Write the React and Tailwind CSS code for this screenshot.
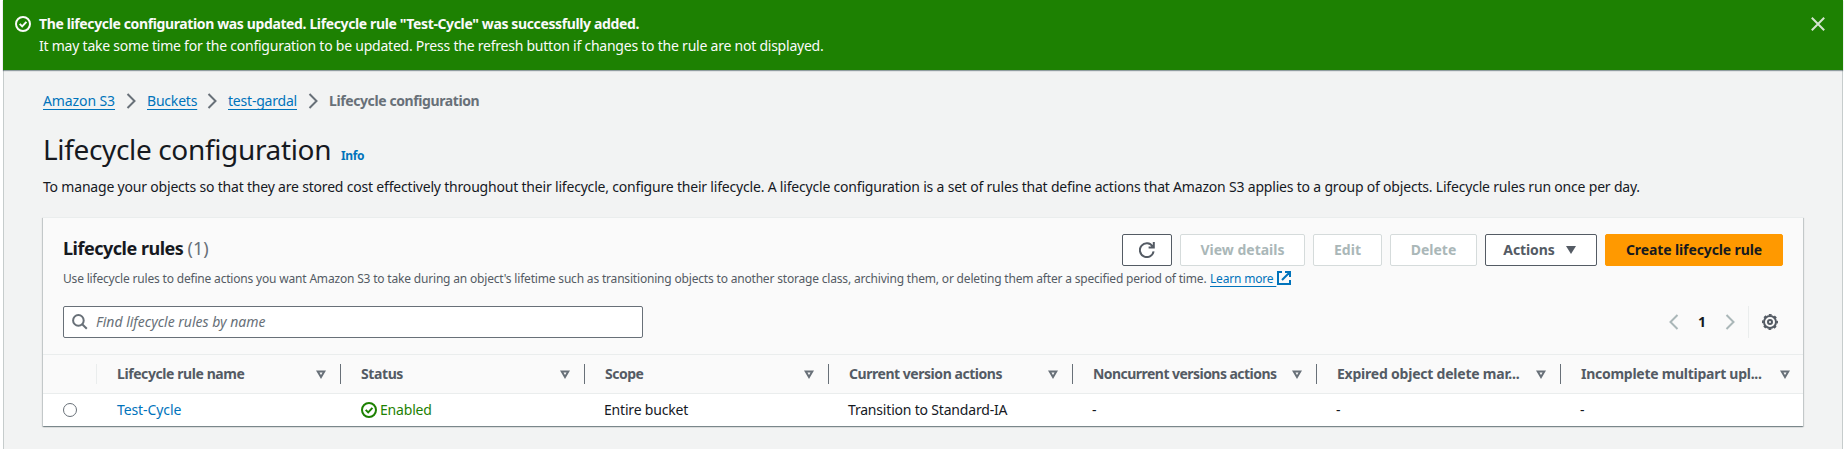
import React from 'react';

function CheckCircle({ className }) {
  return (
    <svg className={className} width="16" height="16" viewBox="0 0 16 16" fill="none" stroke="currentColor" strokeWidth="2">
      <circle cx="8" cy="8" r="7" />
      <path d="M4.7 7.9 7.2 10.4 11.4 5.9" />
    </svg>
  );
}

function Chevron({ left, className }) {
  return (
    <svg className={className} width="16" height="16" viewBox="0 0 16 16" fill="none" stroke="currentColor" strokeWidth="2">
      <path d={left ? 'M11.5 1 4.5 8 11.5 15' : 'M4.5 1 11.5 8 4.5 15'} />
    </svg>
  );
}

function Crumb({ className, children }) {
  return (
    <a className={'text-[#0073bb] underline decoration-1 underline-offset-[3px] [text-decoration-skip-ink:none] ' + className}>
      {children}
    </a>
  );
}

function Button({ className, children }) {
  return (
    <button className={'flex h-8 shrink-0 items-center justify-center rounded-[2px] border text-sm font-bold ' + className}>
      {children}
    </button>
  );
}

const disabled = 'border-[#d5dbdb] bg-white text-[#aab7b8]';

const columns = [
  ['Lifecycle rule name', 'tracking-[-0.42px]'],
  ['Status', 'tracking-[-0.4px]'],
  ['Scope', 'tracking-[-0.5px]'],
  ['Current version actions', 'tracking-[-0.46px]'],
  ['Noncurrent versions actions', 'tracking-[-0.54px]'],
  ['Expired object delete mar...', 'tracking-[-0.22px]'],
  ['Incomplete multipart upl...', 'tracking-[-0.27px]'],
];

export default function App() {
  return (
    <div className="h-[449px] overflow-hidden bg-white pr-[3px] pl-[3px] font-['Noto_Sans','Liberation_Sans',sans-serif] text-sm leading-[22px] text-[#16191f]">
      <div className="h-full border-x border-[#c6cccc] bg-[#f2f3f3]">
        <header className="relative -mx-px flex h-[70px] bg-[#1d8102] pt-[13px] pr-[17px] pl-3 text-[#fafafa] shadow-[0_1px_1px_0_rgba(0,28,36,0.4)]">
          <CheckCircle className="mt-[3px] mr-2 shrink-0" />
          <div className="grow whitespace-nowrap">
            <div className="font-bold tracking-[-0.374px]">
              The lifecycle configuration was updated. Lifecycle rule "Test-Cycle" was successfully added.
            </div>
            <div className="tracking-[-0.23px]">
              It may take some time for the configuration to be updated. Press the refresh button if changes to the rule are not displayed.
            </div>
          </div>
          <svg className="mt-[3px] text-[#d5e4d0]" width="16" height="16" viewBox="0 0 16 16" fill="none" stroke="currentColor" strokeWidth="2">
            <path d="M1.8 1.8 14.2 14.2M14.2 1.8 1.8 14.2" />
          </svg>
        </header>

        <main className="pr-[39px] pl-[39px] whitespace-nowrap">
          <nav className="flex items-center pt-5">
            <Crumb className="w-[72px] tracking-[-0.1px]">Amazon S3</Crumb>
            <Chevron className="mx-2 text-[#687078]" />
            <Crumb className="w-[49px] tracking-[-0.2px]">Buckets</Crumb>
            <Chevron className="mx-2 text-[#687078]" />
            <Crumb className="w-[69px] tracking-[-0.205px]">test-gardal</Crumb>
            <Chevron className="mx-2 text-[#687078]" />
            <span className="font-bold tracking-[-0.4px] text-[#687078]">Lifecycle configuration</span>
          </nav>

          <div className="mt-[19px] flex items-baseline leading-9">
            <h1 className="w-[298px] text-[28px] tracking-[-0.35px]">Lifecycle configuration</h1>
            <a className="text-xs font-bold tracking-[-0.4px] text-[#0073bb]">Info</a>
          </div>
          <p className="mt-[9px] tracking-[-0.194px]">
            To manage your objects so that they are stored cost effectively throughout their lifecycle, configure their lifecycle. A lifecycle configuration is a set of rules that define actions that Amazon S3 applies to a group of objects. Lifecycle rules run once per day.
          </p>

          <section className="mt-[19px] h-[209px] border-t border-[#eaeded] bg-[#fafafa] shadow-[0_1px_1px_0_rgba(0,28,36,0.3),1px_1px_1px_0_rgba(0,28,36,0.15),-1px_1px_1px_0_rgba(0,28,36,0.15)]">
            <div className="px-5 pt-4">
              <div className="flex">
                <h2 className="mt-[3px] grow text-lg leading-[22px] font-bold tracking-[-0.49px]">
                  Lifecycle rules <span className="font-normal tracking-normal text-[#687078]">(1)</span>
                </h2>
                <Button className="mr-2 w-[50px] border-[#545b64] bg-white text-[#545b64]">
                  <svg width="16" height="16" viewBox="0 0 16 16" fill="none" stroke="currentColor" strokeWidth="2">
                    <path d="M14.6 9.3A6.9 6.9 0 1 1 13.6 4.4M14.8 0V5.4H9.6" />
                  </svg>
                </Button>
                <Button className={'mr-2 w-[125px] ' + disabled}>View details</Button>
                <Button className={'mr-2 w-[69px] ' + disabled}>Edit</Button>
                <Button className={'mr-2 w-[87px] ' + disabled}>Delete</Button>
                <Button className="mr-2 w-[112px] gap-2 border-[#545b64] bg-white text-[#545b64]">
                  <span className="tracking-[-0.1px]">Actions</span>
                  <svg width="16" height="16" viewBox="0 0 16 16" fill="currentColor">
                    <path d="M3 4H13L8 12Z" />
                  </svg>
                </Button>
                <Button className="w-[178px] border-[#ff9900] bg-[#ff9900] tracking-[-0.115px] text-[#16191f]">
                  Create lifecycle rule
                </Button>
              </div>

              <div className="mt-1 flex text-xs leading-[18px] tracking-[-0.184px] text-[#545b64]">
                <span className="w-[1147px]">
                  Use lifecycle rules to define actions you want Amazon S3 to take during an object's lifetime such as transitioning objects to another storage class, archiving them, or deleting them after a specified period of time.
                </span>
                <a className="flex text-[#0073bb]">
                  <span className="w-[66px] underline decoration-1 underline-offset-[3px] [text-decoration-skip-ink:none]">Learn more&nbsp;</span>
                  <svg width="16" height="16" viewBox="0 0 16 16" fill="none" stroke="currentColor" strokeWidth="2">
                    <path d="M6 2H2V14H14V10M9 2H14V7M14 2 6 10" />
                  </svg>
                </a>
              </div>

              <div className="mt-[18px] flex h-8 items-center">
                <label className="flex h-8 w-[580px] items-center gap-2 rounded-[2px] border border-[#687078] bg-white pl-2 text-[#687078]">
                  <svg width="16" height="16" viewBox="0 0 16 16" fill="none" stroke="currentColor" strokeWidth="2">
                    <circle cx="6.4" cy="6.4" r="5.3" />
                    <path d="M10.2 10.2 14.8 14.8" />
                  </svg>
                  <span className="italic">Find lifecycle rules by name</span>
                </label>
                <div className="ml-auto flex h-8 items-center">
                  <Chevron left className="text-[#aab7b8]" />
                  <span className="w-10 text-center font-bold">1</span>
                  <Chevron className="text-[#aab7b8]" />
                  <span className="ml-[10px] h-8 w-px bg-[#eaeded]" />
                  <svg className="mr-[5px] ml-[13px] text-[#545b64]" width="16" height="16" viewBox="0 0 16 16" fill="none" stroke="currentColor" strokeWidth="2">
                    <circle cx="8" cy="8" r="2" />
                    <circle cx="8" cy="8" r="6" />
                    <circle cx="8" cy="8" r="7.2" strokeWidth="1.6" strokeDasharray="2.83 2.83" strokeDashoffset="1.4" />
                  </svg>
                </div>
              </div>
            </div>

            <div className="mt-4 flex h-10 items-center border-y border-[#eaeded] font-bold text-[#545b64]">
              <span className="h-5 w-[54px] shrink-0 border-r border-[#eaeded]" />
              {columns.map(([name, tracking], i) => (
                <div
                  key={name}
                  className={'flex h-5 w-[244px] shrink-0 items-center justify-between border-r pr-[14px] pl-5 ' + (i === 6 ? '-mr-1 border-transparent' : 'border-[#687078]')}
                >
                  <span className={tracking}>{name}</span>
                  <svg className="shrink-0" width="10" height="9" viewBox="0 0 10 9" fill="none" stroke="#687078" strokeWidth="2">
                    <path d="M1.7 1.5H8.3L5 7Z" />
                  </svg>
                </div>
              ))}
            </div>
            <div className="flex h-8 items-center bg-white tracking-[-0.19px]">
              <span className="flex w-[74px] pl-5">
                <span className="size-[14px] rounded-full border border-[#687078] bg-white" />
              </span>
              <a className="w-[244px] tracking-[-0.1px] text-[#0073bb]">Test-Cycle</a>
              <span className="flex w-[243px] items-center gap-[3px] text-[#1d8102]">
                <CheckCircle />
                Enabled
              </span>
              <span className="w-[244px]">Entire bucket</span>
              <span className="w-[244px]">Transition to Standard-IA</span>
              <span className="w-[244px]">-</span>
              <span className="w-[244px]">-</span>
              <span>-</span>
            </div>
          </section>
        </main>
      </div>
    </div>
  );
}
